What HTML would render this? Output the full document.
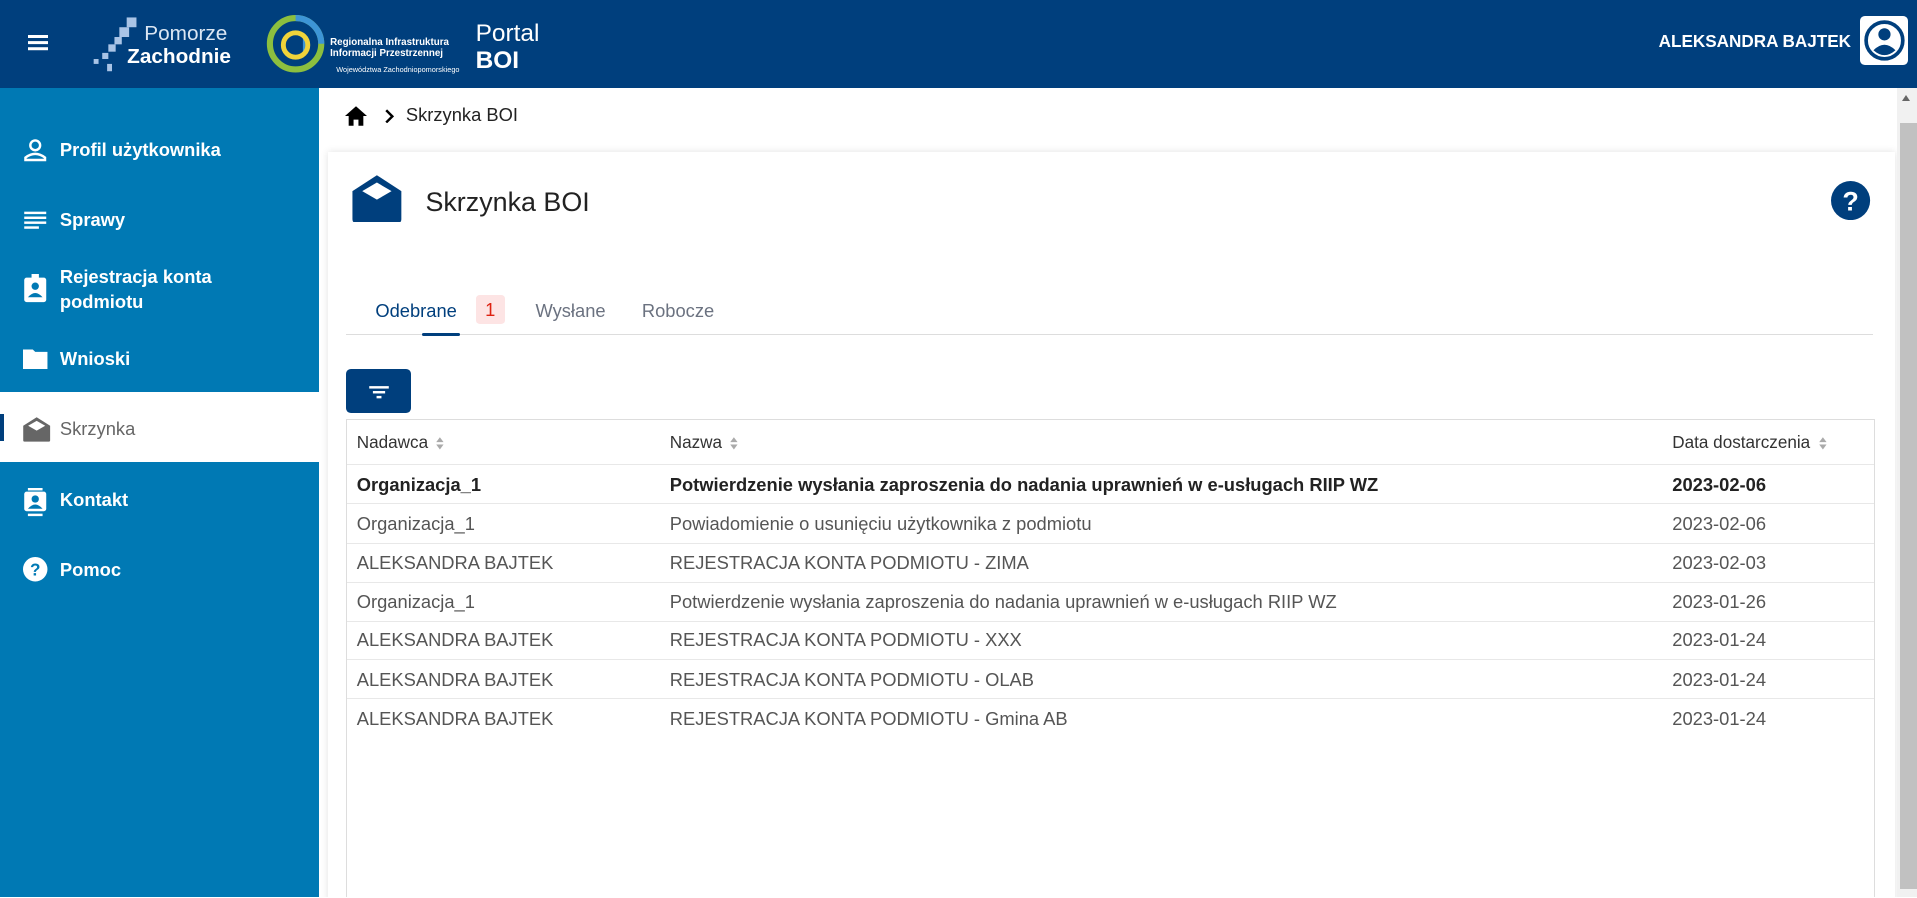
<!DOCTYPE html>
<html><head><meta charset="utf-8"><style>
html,body{margin:0;padding:0;overflow:hidden}
body{width:1917px;height:898px;background:#fff;font-family:"Liberation Sans",sans-serif}
#z{zoom:1.2226;width:1568px;height:734px;position:relative;overflow:hidden}
.hdr{position:absolute;left:0;top:0;width:1568px;height:72px;background:#003f7d;color:#fff}
.side{position:absolute;left:0;top:72px;width:261px;height:662px;background:#0079b4}
.it{position:absolute;left:0;width:261px;color:#fff;font-weight:bold;font-size:15px}
.it svg{position:absolute;left:19px}
.it span{position:absolute;left:49px}
.main{position:absolute;left:261px;top:72px;width:1291px;height:662px;background:#fff;overflow:hidden}
.card{position:absolute;left:7px;top:52px;width:1282px;height:620px;background:#fff;box-shadow:0 0 6px rgba(0,0,0,.12)}
.tb{position:absolute;left:22px;top:271px;width:1249px;height:400px;border:1px solid #ddd}
.row{position:absolute;left:0;width:1249px;height:31px;border-bottom:1px solid #e8e8e8;font-size:15px;color:#555}
.row span{position:absolute;top:7px}
.c1{left:8px}.c2{left:264px}.c3{left:1084px}
.srt{display:inline-block;vertical-align:middle;margin-left:6px}
.sb{position:absolute;left:1552px;top:72px;width:16px;height:662px;background:#f1f1f1}
</style></head><body><div id="z">
<div class="hdr">
 <div style="position:absolute;left:23px;top:29px;width:16px;height:2px;background:#fff;box-shadow:0 5px 0 #fff,0 10px 0 #fff"></div>
 <svg style="position:absolute;left:74px;top:12px" width="50" height="50"><g fill="#a9c4e6"><rect x="30" y="2" width="8" height="8"/><rect x="24" y="10" width="8" height="8"/><rect x="20" y="18" width="6" height="6"/><rect x="15" y="24" width="6" height="6"/><rect x="10" y="31" width="5" height="5"/><rect x="3" y="36" width="4" height="4"/><rect x="14" y="40" width="4" height="6"/></g></svg>
 <div style="position:absolute;left:118px;top:18px;font-size:17px;color:#dbe6f3">Pomorze</div>
 <div style="position:absolute;left:104px;top:37px;font-size:17px;font-weight:bold">Zachodnie</div>
 <svg style="position:absolute;left:217px;top:10px" width="52" height="52"><circle cx="25" cy="26" r="21" fill="none" stroke="#8cbf3f" stroke-width="5"/><path d="M25 5 A21 21 0 0 1 46 26" fill="none" stroke="#3d95d6" stroke-width="5"/><path d="M33 20 v14" stroke="#3d95d6" stroke-width="4"/><circle cx="25" cy="27" r="10" fill="none" stroke="#f0d33a" stroke-width="4"/></svg>
 <div style="position:absolute;left:270px;top:30px;font-size:8px;font-weight:bold;line-height:9px">Regionalna Infrastruktura<br>Informacji Przestrzennej</div>
 <div style="position:absolute;left:275px;top:53px;font-size:6px">Województwa Zachodniopomorskiego</div>
 <div style="position:absolute;left:389px;top:17px;font-size:20px;line-height:22px">Portal<br><b>BOI</b></div>
 <div style="position:absolute;right:54px;top:26px;font-size:14px;font-weight:bold">ALEKSANDRA BAJTEK</div>
 <div style="position:absolute;left:1521px;top:13px;width:40px;height:40px;background:#fff;border-radius:4px"><svg width="40" height="40"><circle cx="20" cy="20" r="15" fill="none" stroke="#003f7d" stroke-width="3"/><circle cx="20" cy="15" r="5" fill="#003f7d"/><path d="M11 28 Q20 19 29 28 Q20 36 11 28Z" fill="#003f7d"/></svg></div>
</div>
<div class="side">
 <div class="it" style="top:41px"><svg width="20" height="20"><circle cx="10" cy="6" r="4" fill="none" stroke="#fff" stroke-width="2"/><path d="M2 18 v-2 q8-6 16 0 v2z" fill="none" stroke="#fff" stroke-width="2"/></svg><span style="top:1px">Profil użytkownika</span></div>
 <div class="it" style="top:98px"><svg width="20" height="20"><g fill="#fff"><rect x="1" y="3" width="18" height="2"/><rect x="1" y="7" width="18" height="2"/><rect x="1" y="11" width="18" height="2"/><rect x="1" y="15" width="12" height="2"/></g></svg><span style="top:1px">Sprawy</span></div>
 <div class="it" style="top:145px"><svg width="20" height="24" style="top:7px"><rect x="1" y="3" width="18" height="20" rx="2" fill="#fff"/><rect x="7" y="0" width="6" height="5" fill="#fff"/><circle cx="10" cy="10" r="3" fill="#0079b4"/><path d="M4 19 q6-7 12 0z" fill="#0079b4"/></svg><span style="line-height:20px">Rejestracja konta<br>podmiotu</span></div>
 <div class="it" style="top:212px"><svg width="22" height="20"><path d="M0 2h8l2 2h10v14H0z" fill="#fff"/></svg><span style="top:1px">Wnioski</span></div>
 <div style="position:absolute;left:0;top:249px;width:261px;height:57px;background:#fff"><div style="position:absolute;left:0;top:18px;width:3px;height:22px;background:#003f7d"></div>
  <svg style="position:absolute;left:18px;top:19px" width="24" height="22"><path d="M1 8 L12 1 L23 8 V20 Q23 21 22 21 H2 Q1 21 1 20Z" fill="#666"/><path d="M5 8 L12 4 L19 8 L12 12Z" fill="#fff"/></svg>
  <span style="position:absolute;left:49px;top:21px;font-size:15px;color:#666">Skrzynka</span></div>
 <div class="it" style="top:327px"><svg width="20" height="24"><rect x="4" y="0" width="12" height="2" fill="#fff"/><rect x="1" y="3" width="18" height="16" rx="2" fill="#fff"/><rect x="4" y="21" width="12" height="2" fill="#fff"/><circle cx="10" cy="9" r="3" fill="#0079b4"/><path d="M4 17 q6-7 12 0z" fill="#0079b4"/></svg><span style="top:1px">Kontakt</span></div>
 <div class="it" style="top:384px"><svg width="20" height="20"><circle cx="10" cy="10" r="10" fill="#fff"/><text x="10" y="15" text-anchor="middle" font-size="14" font-weight="bold" fill="#0079b4" font-family="Liberation Sans">?</text></svg><span style="top:1px">Pomoc</span></div>
</div>
<div class="main">
 <svg style="position:absolute;left:21px;top:14px" width="18" height="18"><path d="M9 1 L18 9 H15 V17 H11 V12 H7 V17 H3 V9 H0Z" fill="#000"/></svg>
 <svg style="position:absolute;left:54px;top:17px" width="8" height="12"><path d="M1 1 L6 6 L1 11" fill="none" stroke="#000" stroke-width="2"/></svg>
 <div style="position:absolute;left:71px;top:13px;font-size:15px;color:#222">Skrzynka BOI</div>
 <div class="card">
  <svg style="position:absolute;left:18px;top:18px" width="44" height="40"><path d="M2 14 L22 1 L42 14 V37 Q42 40 39 40 H5 Q2 40 2 37Z" fill="#003f7d"/><path d="M10 14 L22 7 L34 14 L22 21Z" fill="#fff"/></svg>
  <div style="position:absolute;left:80px;top:29px;font-size:22px;color:#222">Skrzynka BOI</div>
  <svg style="position:absolute;left:1230px;top:24px" width="32" height="32"><circle cx="16" cy="16" r="16" fill="#003f7d"/><text x="16" y="24" text-anchor="middle" font-size="22" font-weight="bold" fill="#fff" font-family="Liberation Sans">?</text></svg>
  <div style="position:absolute;left:39px;top:121px;font-size:15px;color:#003f7d">Odebrane</div>
  <div style="position:absolute;left:121px;top:117px;width:24px;height:24px;background:#fde4e4;border-radius:3px;color:#d21;font-size:15px;text-align:center;line-height:24px">1</div>
  <div style="position:absolute;left:170px;top:121px;font-size:15px;color:#6b7280">Wysłane</div>
  <div style="position:absolute;left:257px;top:121px;font-size:15px;color:#6b7280">Robocze</div>
  <div style="position:absolute;left:15px;top:149px;width:1249px;height:1px;background:#ddd"></div>
  <div style="position:absolute;left:77px;top:148px;width:31px;height:3px;background:#003f7d;border-radius:2px"></div>
  <div style="position:absolute;left:15px;top:178px;width:53px;height:36px;background:#003f7d;border-radius:4px"><svg width="53" height="36"><g fill="#fff"><rect x="19" y="14" width="16" height="2"/><rect x="22" y="18" width="10" height="2"/><rect x="25" y="22" width="4" height="2"/></g></svg></div>
 </div>
 <div class="tb">
  <div class="row" style="top:0;height:36px;font-size:14px;color:#333"><span class="c1" style="top:10px">Nadawca<svg class="srt" width="8" height="12"><path d="M4 1 L7 5 H1Z M4 11 L7 7 H1Z" fill="#aaa"/></svg></span><span class="c2" style="top:10px">Nazwa<svg class="srt" width="8" height="12"><path d="M4 1 L7 5 H1Z M4 11 L7 7 H1Z" fill="#aaa"/></svg></span><span class="c3" style="top:10px">Data dostarczenia<svg class="srt" width="8" height="12"><path d="M4 1 L7 5 H1Z M4 11 L7 7 H1Z" fill="#aaa"/></svg></span></div>
  <div class="row" style="top:37px;font-weight:bold;color:#222"><span class="c1">Organizacja_1</span><span class="c2">Potwierdzenie wysłania zaproszenia do nadania uprawnień w e-usługach RIIP WZ</span><span class="c3">2023-02-06</span></div>
  <div class="row" style="top:69px"><span class="c1">Organizacja_1</span><span class="c2">Powiadomienie o usunięciu użytkownika z podmiotu</span><span class="c3">2023-02-06</span></div>
  <div class="row" style="top:101px"><span class="c1">ALEKSANDRA BAJTEK</span><span class="c2">REJESTRACJA KONTA PODMIOTU - ZIMA</span><span class="c3">2023-02-03</span></div>
  <div class="row" style="top:133px"><span class="c1">Organizacja_1</span><span class="c2">Potwierdzenie wysłania zaproszenia do nadania uprawnień w e-usługach RIIP WZ</span><span class="c3">2023-01-26</span></div>
  <div class="row" style="top:164px"><span class="c1">ALEKSANDRA BAJTEK</span><span class="c2">REJESTRACJA KONTA PODMIOTU - XXX</span><span class="c3">2023-01-24</span></div>
  <div class="row" style="top:196px"><span class="c1">ALEKSANDRA BAJTEK</span><span class="c2">REJESTRACJA KONTA PODMIOTU - OLAB</span><span class="c3">2023-01-24</span></div>
  <div class="row" style="top:228px;border-bottom:none"><span class="c1">ALEKSANDRA BAJTEK</span><span class="c2">REJESTRACJA KONTA PODMIOTU - Gmina AB</span><span class="c3">2023-01-24</span></div>
 </div>
</div>
<div class="sb"><div style="position:absolute;left:4px;top:6px;width:0;height:0;border-left:4px solid transparent;border-right:4px solid transparent;border-bottom:5px solid #666"></div><div style="position:absolute;left:2px;top:29px;width:14px;height:626px;background:#c1c1c1"></div></div>
</div></body></html>
